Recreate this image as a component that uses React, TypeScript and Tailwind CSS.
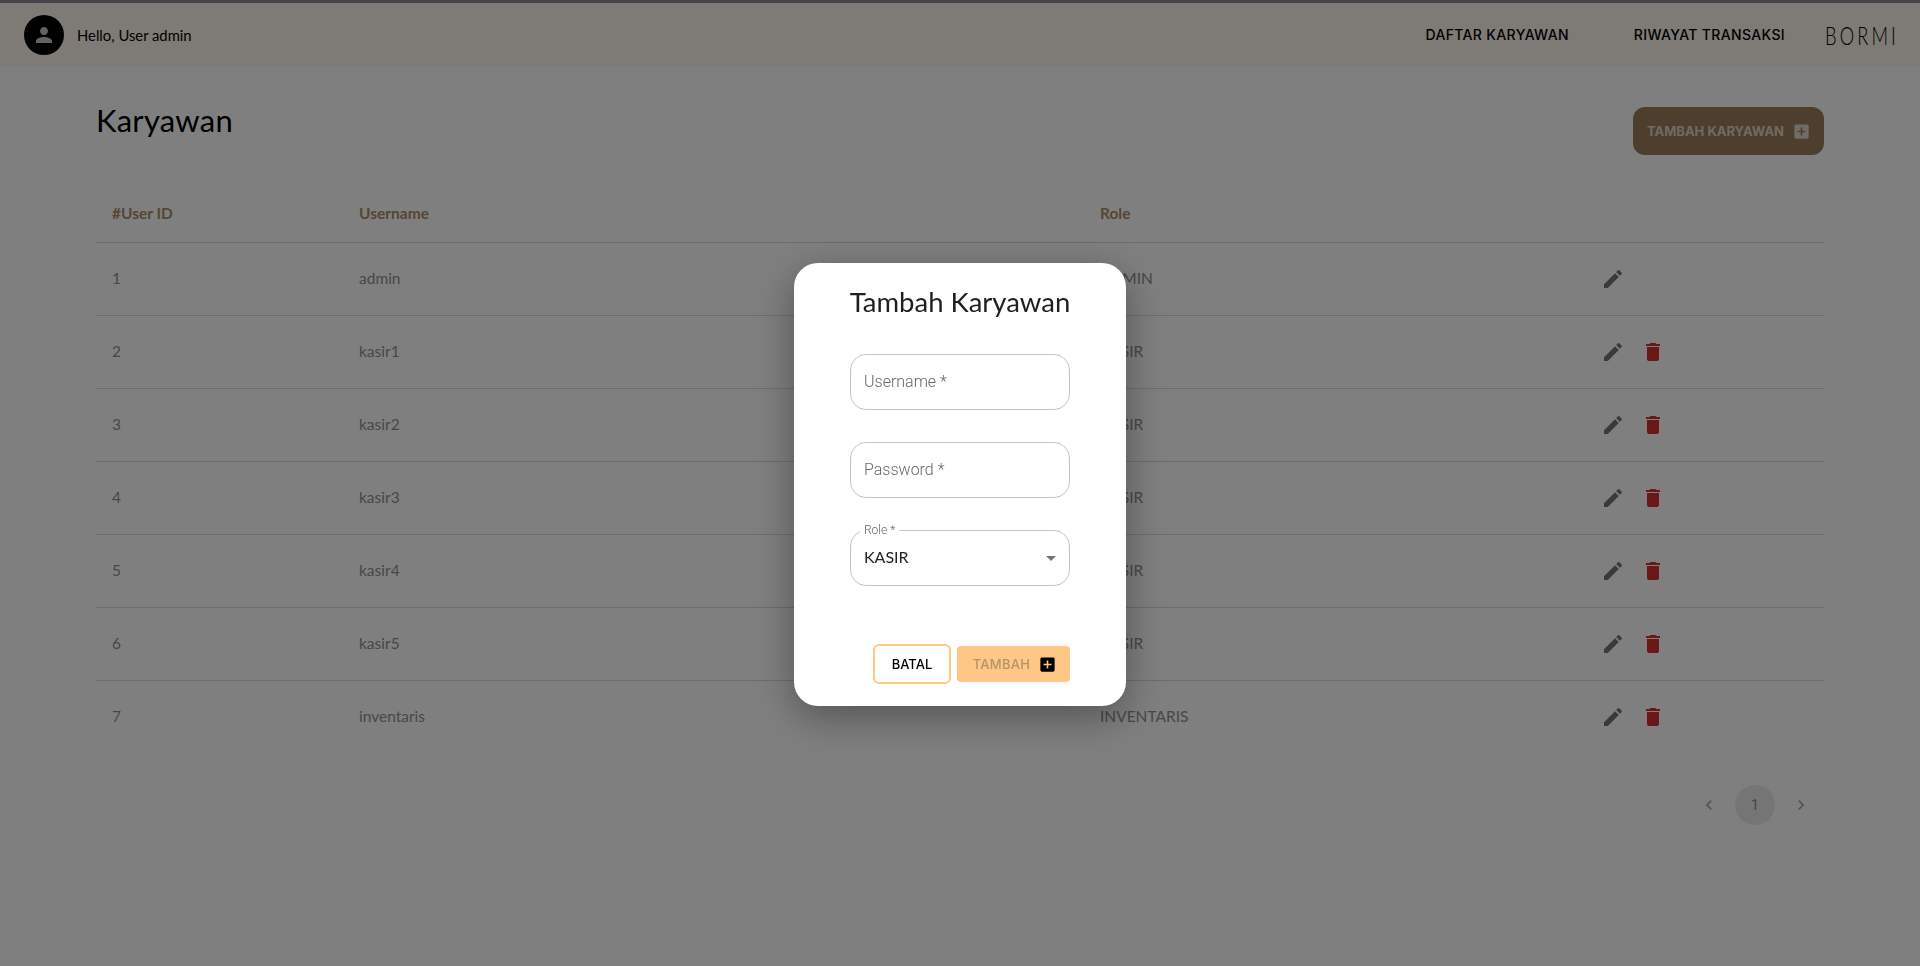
const users = [
  { id: 1, username: 'admin', role: 'ADMIN' },
  { id: 2, username: 'kasir1', role: 'KASIR' },
  { id: 3, username: 'kasir2', role: 'KASIR' },
  { id: 4, username: 'kasir3', role: 'KASIR' },
  { id: 5, username: 'kasir4', role: 'KASIR' },
  { id: 6, username: 'kasir5', role: 'KASIR' },
  { id: 7, username: 'inventaris', role: 'INVENTARIS' },
];

const Icon = ({ d, className }: { d: string; className: string }) => (
  <svg viewBox="0 0 24 24" fill="currentColor" className={className}>
    <path d={d} />
  </svg>
);

const icons = {
  person: 'M12 12c2.21 0 4-1.79 4-4s-1.79-4-4-4-4 1.79-4 4 1.79 4 4 4zm0 2c-2.67 0-8 1.34-8 4v2h16v-2c0-2.66-5.33-4-8-4z',
  edit: 'M3 17.25V21h3.75L17.81 9.94l-3.75-3.75L3 17.25zM20.71 7.04c.39-.39.39-1.02 0-1.41l-2.34-2.34a.9959.9959 0 0 0-1.41 0l-1.83 1.83 3.75 3.75 1.83-1.83z',
  trash: 'M6 19c0 1.1.9 2 2 2h8c1.1 0 2-.9 2-2V7H6v12zM19 4h-3.5l-1-1h-5l-1 1H5v2h14V4z',
  addBox: 'M19 3H5c-1.11 0-2 .9-2 2v14c0 1.1.89 2 2 2h14c1.1 0 2-.9 2-2V5c0-1.1-.9-2-2-2zm-2 10h-4v4h-2v-4H7v-2h4V7h2v4h4v2z',
  left: 'M15.41 7.41 14 6l-6 6 6 6 1.41-1.41L10.83 12z',
  right: 'M10 6 8.59 7.41 13.17 12l-4.58 4.59L10 18l6-6z',
  drop: 'M7 10l5 5 5-5z',
};

function Field({ label }: { label: string }) {
  return (
    <div className="flex h-14 w-[220px] items-center rounded-2xl border border-[#c4c4c4] px-[13px] font-['Roboto',sans-serif] text-base font-light text-[#666]">
      {label}
    </div>
  );
}

export default function App() {
  return (
    <div className="relative min-h-[966px] bg-white font-['Lato',sans-serif] text-black">
      <header className="flex h-[67px] items-center justify-between border-t-[3px] border-[#898c94] bg-[#fcf4ea] pl-6 pr-[27px]">
        <div className="flex items-center gap-[13px]">
          <div className="flex h-10 w-10 items-center justify-center rounded-full bg-black text-[#c4c4c4]">
            <Icon d={icons.person} className="h-6 w-6" />
          </div>
          <span className="text-[14.8px]">Hello, User admin</span>
        </div>
        <nav className="flex items-center font-['Inter',sans-serif] text-[14px] font-medium tracking-[0.35px]">
          <a className="mr-[65px] -mt-0.5">DAFTAR KARYAWAN</a>
          <a className="mr-10 -mt-0.5">RIWAYAT TRANSAKSI</a>
          <div className="w-[68px]">
            <span className="block origin-left scale-x-[0.7] font-['Lato',sans-serif] text-[26px] leading-none font-light tracking-[4.5px] whitespace-nowrap">BORMI</span>
          </div>
        </nav>
      </header>

      <main className="px-24">
        <div className="flex items-start justify-between pt-10">
          <h1 className="mt-[-5px] text-[31px] leading-9 tracking-[0.25px]">Karyawan</h1>
          <button className="flex h-12 w-[191px] items-center justify-center gap-2 rounded-xl bg-[#9a7c5a] pt-px pl-px font-['Inter',sans-serif] text-[13px] font-bold text-[#fff]/70">
            TAMBAH KARYAWAN
            <Icon d={icons.addBox} className="h-[19px] w-[19px]" />
          </button>
        </div>

        <table className="mt-[15px] w-full table-fixed border-collapse text-[15.5px] text-[#8f8f8f]">
          <thead>
            <tr className="h-[72px] border-b border-[#d9d9d9] text-left text-[#ad8c68]">
              <th className="w-[247px] pl-4 pt-[15px] font-bold">#User ID</th>
              <th className="w-[741px] pl-4 pt-[15px] font-bold">Username</th>
              <th className="w-[500px] pl-4 pt-[15px] font-bold">Role</th>
              <th />
            </tr>
          </thead>
          <tbody>
            {users.map(user => (
              <tr key={user.id} className="h-[73px] border-b border-[#d9d9d9] last:border-b-0">
                <td className="pl-4">{user.id}</td>
                <td className="pl-4">{user.username}</td>
                <td className="pl-4">{user.role}</td>
                <td className="pl-[17px]">
                  <div className="flex items-center gap-4">
                    <Icon d={icons.edit} className="h-6 w-6 text-[#757575]" />
                    {user.role !== 'ADMIN' && <Icon d={icons.trash} className="h-6 w-6 text-[#d32f2f]" />}
                  </div>
                </td>
              </tr>
            ))}
          </tbody>
        </table>

        <div className="mt-8 flex items-center justify-end gap-4 pr-[13px] text-[#a8a8a8]">
          <Icon d={icons.left} className="h-5 w-5" />
          <div className="flex h-10 w-10 items-center justify-center rounded-full bg-[#ebebeb] font-['Roboto',sans-serif] text-sm text-[#8a8a8a]">1</div>
          <Icon d={icons.right} className="h-5 w-5" />
        </div>
      </main>

      {/* modal */}
      <div className="fixed inset-0 flex items-center justify-center bg-black/50 pt-[2px]">
        <div className="flex h-[443px] w-[332px] flex-col items-center rounded-3xl bg-white shadow-[0_11px_40px_rgba(0,0,0,0.35)]">
          <h2 className="mt-[21px] text-[27.5px] leading-9 text-[#1f1f1f]">Tambah Karyawan</h2>
          <div className="mt-[34px] flex flex-col gap-8">
            <Field label="Username *" />
            <Field label="Password *" />
            <div className="relative flex h-14 w-[220px] items-center justify-between rounded-2xl border border-[#c4c4c4] pl-[13px] pr-[6px] text-base text-[#222]">
              <span className="absolute -top-[7px] left-[9px] bg-white px-1 font-['Roboto',sans-serif] text-xs leading-3 font-light text-[#666]">Role *</span>
              <span className="-mt-0.5">KASIR</span>
              <Icon d={icons.drop} className="h-6 w-6 text-[#757575]" />
            </div>
          </div>
          <div className="mt-[58px] flex w-[220px] items-center justify-end gap-[6px]">
            <button className="h-10 w-[78px] rounded-md border-2 border-[#ffc785] pt-0.5 font-['Inter',sans-serif] text-[13px] font-medium">BATAL</button>
            <button className="flex h-9 w-[113px] items-center justify-center gap-2 rounded bg-[#ffc785] pt-0.5 pl-[3px] font-['Inter',sans-serif] text-[13px] font-medium tracking-[0.3px] text-[#b3936c]">
              TAMBAH
              <Icon d={icons.addBox} className="h-[19px] w-[19px] text-black" />
            </button>
          </div>
        </div>
      </div>
    </div>
  );
}
